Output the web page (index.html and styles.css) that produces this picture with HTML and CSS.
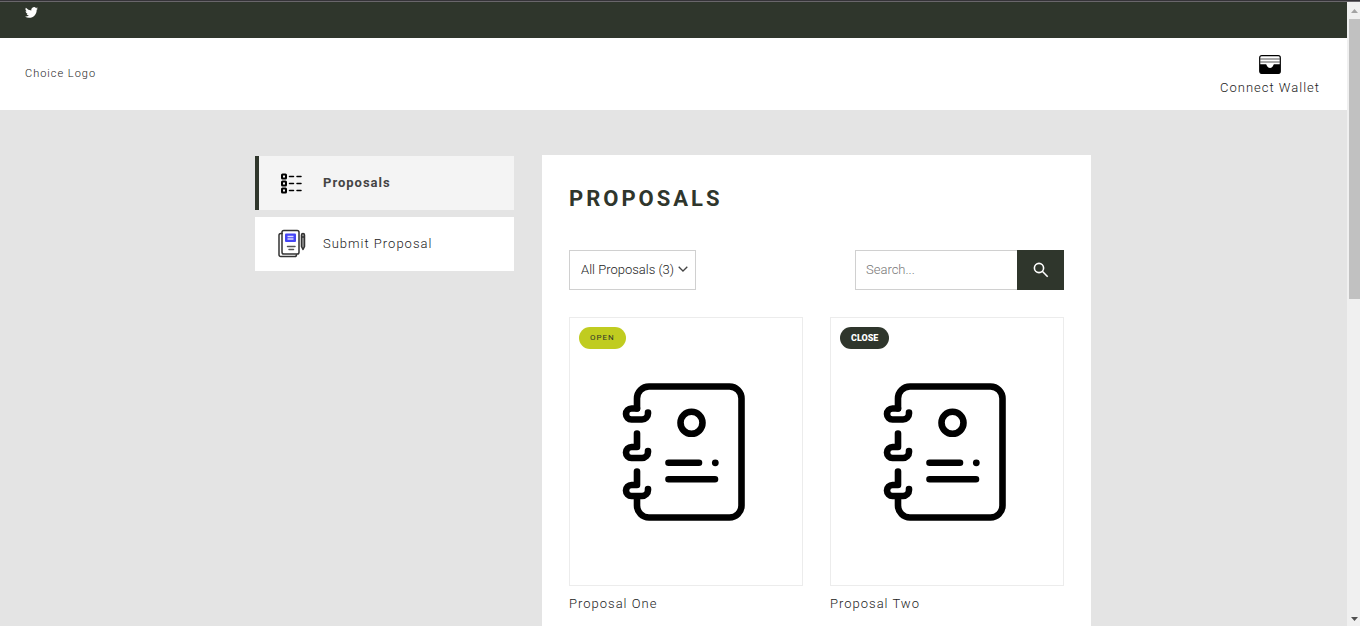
FILE: index.html
```html
<!DOCTYPE html>
<html lang="en">
<head>
<meta charset="utf-8">
<title>Proposals</title>
<link rel="stylesheet" href="styles.css">
</head>
<body>
<svg class="defs" aria-hidden="true">
  <symbol id="notebook" viewBox="1 2 150 160">
    <g fill="none" stroke="#000" stroke-width="6.6" stroke-linecap="round" stroke-linejoin="round">
      <path d="M27 38.500V28.500a12 12 0 0 1 12-12h80.500a12 12 0 0 1 12 12v107a12 12 0 0 1-12 12H39a12 12 0 0 1-12-12V127"/>
      <path d="M27 38.500h-5.500a5.500 5.500 0 0 0 0 11H32a6 6 0 0 0 6-6v-1"/>
      <path d="M27 63.500V77h-5.500a5.500 5.500 0 0 0 0 11H32a6 6 0 0 0 6-6v-1"/>
      <path d="M27 101.500V115h-5.500a5.500 5.500 0 0 0 0 11H32a6 6 0 0 0 6-6v-1"/>
      <circle cx="81.500" cy="52.800" r="11"/>
      <path d="M58.500 92.800H89M58.500 109.200h46.500"/>
    </g>
    <circle cx="105.300" cy="92.800" r="3.400"/>
  </symbol>
</svg>
<div class="frame">
  <div class="page">
    <div class="topbar">
      <a href="#" aria-label="Twitter"><svg class="twitter" viewBox="0 0 24 20"><path fill="#fff" d="M24 2.400a9.800 9.800 0 0 1-2.800.8A4.900 4.900 0 0 0 23.300.500a9.900 9.900 0 0 1-3.100 1.200 4.900 4.900 0 0 0-8.400 4.500A14 14 0 0 1 1.700 1.100a4.900 4.900 0 0 0 1.500 6.600A4.900 4.900 0 0 1 1 7.100a4.900 4.900 0 0 0 3.900 4.900 4.900 4.900 0 0 1-2.200.1 4.900 4.900 0 0 0 4.600 3.400A9.900 9.900 0 0 1 0 17.500a13.900 13.900 0 0 0 7.500 2.200c9.100 0 14.300-7.700 14-14.600A10 10 0 0 0 24 2.400z"/></svg></a>
    </div>
    <header class="header">
      <a class="logo" href="#">Choice Logo</a>
      <button class="wallet" type="button">
        <svg class="wallet-icon" viewBox="0 0 22 19"><rect x=".7" y=".7" width="20.600" height="17.600" rx="2" fill="#fff" stroke="#000" stroke-width="1.200"/><path d="M1 4h20M1 7h20" stroke="#555" stroke-width="1"/><path d="M1 9.300h5.500c1 0 1 .7 1.500 1.600.7 1.300 1.800 2 3 2s2.300-.7 3-2c.5-.9.5-1.600 1.500-1.600H21v7.700a1.500 1.500 0 0 1-1.500 1.500h-17A1.500 1.500 0 0 1 1 17z"/></svg>
        <span>Connect Wallet</span>
      </button>
    </header>
    <div class="container">
      <nav class="sidebar">
        <a class="nav-item active" href="#">
          <svg class="nav-icon" viewBox="0 0 30 30"><g fill="none" stroke="#000" stroke-width="2"><rect x="5" y="6.500" width="4" height="4" rx=".5"/><rect x="5" y="13.500" width="4" height="4" rx=".5"/><rect x="5" y="20.500" width="4" height="4" rx=".5"/><path stroke-width="1.500" stroke-linecap="round" d="M12.500 8.500h4M20 8.500h4M12.500 15.500h4M20 15.500h4M12.500 22.500h4M20 22.500h4"/></g></svg>
          <span>Proposals</span>
        </a>
        <a class="nav-item" href="#">
          <svg class="nav-icon" viewBox="0 0 30 30"><g fill="none" stroke="#333" stroke-width="1.500" stroke-linejoin="round" stroke-linecap="round"><path d="M5 4.500H3.800A1.800 1.800 0 0 0 2 6.300v19.500A1.700 1.700 0 0 0 3.700 27.500h14a1.800 1.800 0 0 0 1.800-1.800"/><rect x="5" y="1.500" width="17" height="23.500" rx="1.800"/><path fill="#999" d="M24.500 6a1.500 1.500 0 0 1 3 0V17.500l-1.500 3-1.500-3zM24.500 8h3"/><path stroke="#555" d="M10.500 17.500h7.500M12 20.500h4.500"/></g><rect x="8" y="4.500" width="11" height="8.500" rx="1" fill="#4545f5"/><path d="M10.500 7.500h6M10.500 10h6" stroke="#dcdcff" stroke-width="1.300"/></svg>
          <span>Submit Proposal</span>
        </a>
      </nav>
      <main class="panel">
        <h1>PROPOSALS</h1>
        <form class="tools">
          <div class="select-wrap">
            <select aria-label="Filter proposals"><option>All Proposals (3)</option></select>
            <svg class="chevron" viewBox="0 0 10 6"><path d="M.7.700 5 5 9.300.700" fill="none" stroke="#444" stroke-width="1.300"/></svg>
          </div>
          <div class="search">
            <input type="text" placeholder="Search..." aria-label="Search">
            <button type="submit" aria-label="Search"><svg class="lens" viewBox="0 0 16 16"><g fill="none" stroke="#fff" stroke-width="1.600"><circle cx="6" cy="6" r="4.600"/><path d="m9.300 9.300 5.400 5.400"/></g></svg></button>
          </div>
        </form>
        <div class="grid">
          <article>
            <a class="card" href="#" aria-label="Proposal One"><svg class="notebook"><use href="#notebook"/></svg><span class="badge open">OPEN</span></a>
            <a class="title" href="#">Proposal One</a>
          </article>
          <article>
            <a class="card" href="#" aria-label="Proposal Two"><svg class="notebook"><use href="#notebook"/></svg><span class="badge close">CLOSE</span></a>
            <a class="title" href="#">Proposal Two</a>
          </article>
        </div>
      </main>
    </div>
  </div>
  <div class="scrollbar" aria-hidden="true">
    <svg class="arrow" viewBox="0 0 7 4"><path d="M3.500 0 7 4H0z" fill="#a3a3a3"/></svg>
    <div class="track"><div class="thumb"></div></div>
    <svg class="arrow" viewBox="0 0 7 4"><path d="M0 0h7L3.500 4z" fill="#505050"/></svg>
  </div>
</div>
</body>
</html>
```
FILE: styles.css
```css
* { box-sizing: border-box; }
body {
  margin: 0;
  font-family: Roboto, "Liberation Sans", sans-serif;
  font-size: 13px;
  font-weight: 300;
  line-height: 20px;
  letter-spacing: 1px;
  color: #222;
  background: #e4e4e4;
}
a { color: inherit; text-decoration: none; }
button, input, select { font: inherit; border-radius: 0; }
svg { display: block; }
.defs { position: absolute; width: 0; height: 0; }
.frame {
  display: flex;
  height: 100vh;
  overflow: hidden;
  border-top: 1px solid #353338;
  box-shadow: inset 0 1px #69666b;
}
.page { flex: 1; display: flex; flex-direction: column; padding-top: 1px; }
.topbar { flex: 0 0 36px; padding: 5px 25px; background: #2f362c; }
.twitter { width: 13px; height: 11px; }
.header {
  flex: none;
  display: flex;
  align-items: center;
  justify-content: space-between;
  min-height: 72px;
  padding: 0 27px 0 25px;
  background: #fff;
}
.logo { font-size: 11px; }
.wallet {
  display: flex;
  flex-direction: column;
  align-items: center;
  gap: 4px;
  padding: 4px 0 0;
  border: 0;
  background: none;
  color: inherit;
  letter-spacing: 1px;
}
.wallet-icon { width: 22px; height: 19px; }
.container {
  flex: 1;
  display: flex;
  gap: 28px;
  width: 100%;
  max-width: 837px;
  margin: 0 auto;
  padding: 45px 1px 0 0;
}
.sidebar { flex: 0 0 259px; display: flex; flex-direction: column; gap: 7px; padding-top: 1px; }
.nav-item {
  display: flex;
  align-items: center;
  gap: 16px;
  height: 54px;
  padding-left: 18px;
  border-left: 4px solid #fff;
  background: #fff;
}
.nav-item.active { border-color: #2f362c; background: #f4f4f4; color: #444; font-weight: 700; }
.nav-icon { width: 30px; height: 30px; }
.panel { flex: 1; min-width: 0; padding: 28px 27px; background: #fff; }
h1 {
  margin: 0;
  font-size: 22px;
  line-height: 32px;
  font-weight: 700;
  letter-spacing: 3px;
  color: #2f362c;
}
.tools { display: flex; justify-content: space-between; margin: 35px 0 27px; }
.select-wrap { position: relative; }
select {
  appearance: none;
  width: 127px;
  height: 40px;
  padding: 0 11px;
  border: 1px solid #d0d0d0;
  background: #fff;
  color: inherit;
}
.chevron { position: absolute; right: 8px; top: 16px; width: 10px; height: 6px; pointer-events: none; }
.search { display: flex; width: 209px; height: 40px; }
.search input {
  flex: 1;
  min-width: 0;
  padding: 0 10px;
  border: 1px solid #d0d0d0;
  border-right: 0;
}
.search input::placeholder { color: #777; }
.search button {
  display: grid;
  place-items: center;
  width: 47px;
  padding: 0;
  border: 0;
  background: #2f362c;
}
.lens { width: 16px; height: 16px; }
.grid { display: grid; grid-template-columns: 1fr 1fr; gap: 27px; }
.card {
  position: relative;
  display: grid;
  place-items: center;
  height: 269px;
  border: 1px solid #ececec;
}
.notebook { width: 150px; height: 160px; }
.badge {
  position: absolute;
  top: 9px;
  left: 9px;
  padding: 0 11px;
  border-radius: 11px;
  font-size: 8px;
  line-height: 22px;
}
.open { background: #c0cc20; color: #2f362c; font-weight: 400; }
.close { background: #2f362c; color: #fff; font-size: 9px; font-weight: 900; letter-spacing: 0; }
.title { display: block; margin-top: 8px; }
.scrollbar {
  display: flex;
  flex-direction: column;
  align-items: center;
  width: 13px;
  margin-top: 1px;
  padding: 7px 0 5px 2px;
  background: #f0f0f0;
}
.arrow { width: 7px; height: 4px; }
.track { flex: 1; width: 100%; padding: 6px 0; }
.thumb { height: 280px; background: #c1c1c1; }
```
